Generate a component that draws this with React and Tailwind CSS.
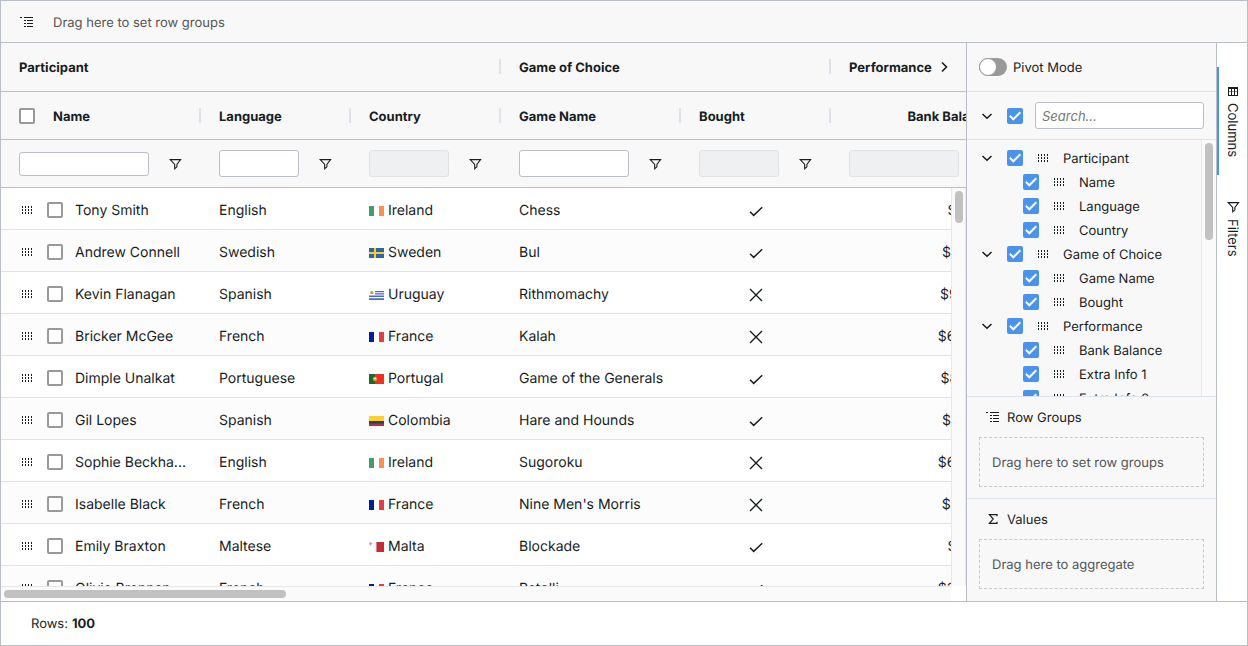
import React from 'react';

const columns = [
  { id: 'name', label: 'Name', width: 'w-[200px]' },
  { id: 'language', label: 'Language', width: 'w-[150px]' },
  { id: 'country', label: 'Country', width: 'w-[150px]', disabled: true },
  { id: 'game', label: 'Game Name', width: 'w-[180px]' },
  { id: 'bought', label: 'Bought', width: 'w-[150px]', disabled: true },
  { id: 'balance', label: 'Bank Balance', width: 'w-[180px]', disabled: true },
];

const rows = [
  ['Tony Smith', 'English', 'Ireland', 'Chess', true, '$7,432'],
  ['Andrew Connell', 'Swedish', 'Sweden', 'Bul', true, '$17,240'],
  ['Kevin Flanagan', 'Spanish', 'Uruguay', 'Rithmomachy', false, '$91,479'],
  ['Bricker McGee', 'French', 'France', 'Kalah', false, '$64,272'],
  ['Dimple Unalkat', 'Portuguese', 'Portugal', 'Game of the Generals', true, '$81,477'],
  ['Gil Lopes', 'Spanish', 'Colombia', 'Hare and Hounds', true, '$17,240'],
  ['Sophie Beckha...', 'English', 'Ireland', 'Sugoroku', false, '$64,273'],
  ['Isabelle Black', 'French', 'France', "Nine Men's Morris", false, '$17,420'],
  ['Emily Braxton', 'Maltese', 'Malta', 'Blockade', true, '$7,432'],
  ['Olivia Brennan', 'French', 'France', 'Patolli', true, '$34,272'],
];

const tree = [
  { label: 'Participant', children: ['Name', 'Language', 'Country'] },
  { label: 'Game of Choice', children: ['Game Name', 'Bought'] },
  { label: 'Performance', children: ['Bank Balance', 'Extra Info 1', 'Extra Info 2'] },
];

function Svg({ children, className = '' }) {
  return (
    <svg viewBox="0 0 16 16" aria-hidden="true" className={`size-4 shrink-0 ${className}`} fill="none" stroke="currentColor">
      {children}
    </svg>
  );
}

const Grip = () => (
  <Svg>
    <path
      stroke="none"
      fill="currentColor"
      d="M3 4h1v2H3zM6 4h1v2H6zM9 4h1v2H9zM12 4h1v2h-1zM3 7h1v2H3zM6 7h1v2H6zM9 7h1v2H9zM12 7h1v2h-1zM3 10h1v2H3zM6 10h1v2H6zM9 10h1v2H9zM12 10h1v2h-1z"
    />
  </Svg>
);

const GroupIcon = () => (
  <Svg>
    <path
      stroke="none"
      fill="currentColor"
      d="M1 3h2v1H1zM5 3h9v1H5zM5 6h2v1H5zM8 6h6v1H8zM5 9h2v1H5zM8 9h6v1H8zM5 12h2v1H5zM8 12h6v1H8z"
    />
  </Svg>
);

const FilterIcon = () => (
  <Svg>
    <path strokeWidth="1.1" d="M3.2 3.6h10.4L9.9 8.4v2.4l-2.2 2V8.4z" />
  </Svg>
);

const ColumnsIcon = () => (
  <Svg>
    <path stroke="none" fill="currentColor" d="M3 4h10v9H3zM4 6v6h2V6zM7 6v6h2V6zM10 6v6h2V6z" fillRule="evenodd" />
    <path strokeWidth="1" strokeOpacity="0.5" d="M4 8.5h8" />
  </Svg>
);

const SigmaIcon = () => (
  <Svg>
    <path strokeWidth="1.2" d="M12 5.2V3.6H4.4L8.2 8l-3.8 4.4H12v-1.6" />
  </Svg>
);

const ChevronDown = () => (
  <Svg>
    <path strokeWidth="1.5" d="M3.5 6L8 10.3L12.5 6" />
  </Svg>
);

const ChevronRight = () => (
  <Svg>
    <path strokeWidth="1.6" d="M6 3.5l4.5 4.5L6 12.5" />
  </Svg>
);

const Tick = () => (
  <Svg>
    <path strokeWidth="1.5" d="M2 8.8L5.7 12.4L14.2 4.2" />
  </Svg>
);

const Cross = () => (
  <Svg>
    <path strokeWidth="1.4" d="M2 2l12 12M14 2L2 14" />
  </Svg>
);

function Flag({ country }) {
  const art = {
    Ireland: (
      <>
        <path fill="#fff" d="M0 0h15v10H0z" />
        <path fill="#469b69" d="M0 0h5v10H0z" />
        <path fill="#f6914f" d="M10 0h5v10h-5z" />
      </>
    ),
    France: (
      <>
        <path fill="#fff" d="M0 0h15v10H0z" />
        <path fill="#001e96" d="M0 0h5v10H0z" />
        <path fill="#e03f46" d="M10 0h5v10h-5z" />
      </>
    ),
    Sweden: (
      <>
        <path fill="#2b66a8" d="M0 0h15v10H0z" />
        <path fill="#fbcc2e" d="M5 0h2v10H5zM0 4h15v2H0z" />
      </>
    ),
    Uruguay: (
      <>
        <path fill="#fff" d="M0 0h15v10H0z" />
        <path fill="#4c69c6" d="M6 1h9v1.2H6zM6 3.2h9v1.3H6zM0 5.6h15v1.3H0zM0 8.2h15v1.8H0z" />
        <circle cx="2.8" cy="2.6" r="1.7" fill="#c99a3c" />
      </>
    ),
    Portugal: (
      <>
        <path fill="#ee3124" d="M0 0h15v10H0z" />
        <path fill="#22662d" d="M0 0h6v10H0z" />
        <circle cx="6" cy="5" r="2.2" fill="#d8a02c" />
        <path fill="#e9e4e0" d="M5 3.8h2v2H5z" />
        <path fill="#e03b36" d="M5 5.4h2L6 6.6z" />
      </>
    ),
    Colombia: (
      <>
        <path fill="#fbd12f" d="M0 0h15v5H0z" />
        <path fill="#1d3f90" d="M0 5h15v3H0z" />
        <path fill="#c72a36" d="M0 7.6h15V10H0z" />
      </>
    ),
    Malta: (
      <>
        <path fill="#fff" d="M0 0h15v10H0z" />
        <path fill="#c42c36" d="M7.4 0H15v10H7.4z" />
        <path fill="#c9a3a8" d="M1 0h1.3v3.4H1zM0 1.1h3.4v1.2H0z" />
      </>
    ),
  };
  return (
    <svg viewBox="0 0 15 10" aria-hidden="true" className="mt-0.5 h-2.5 w-[15px] shrink-0">
      {art[country]}
    </svg>
  );
}

function Checkbox({ checked = false, label, id }) {
  return (
    <span className="relative flex size-4 shrink-0">
      <input
        id={id}
        type="checkbox"
        aria-label={label}
        defaultChecked={checked}
        className="peer size-4 appearance-none rounded-xs border-2 border-[#999] bg-white checked:border-[#4a92ed] checked:bg-[#4a92ed]"
      />
      <svg viewBox="0 0 16 16" aria-hidden="true" className="pointer-events-none absolute inset-0 hidden size-4 peer-checked:block" fill="none" stroke="#fff" strokeWidth="2">
        <path d="M2.8 7.8L6.3 11.3L13.3 4.3" />
      </svg>
    </span>
  );
}

function Separator() {
  return <span className="absolute top-4 right-0 h-[15px] w-0.5 bg-[#dde2eb]" />;
}

function ColGroup() {
  return (
    <colgroup>
      {columns.map((c) => (
        <col key={c.id} className={c.width} />
      ))}
    </colgroup>
  );
}

function HeaderTable() {
  return (
    <div className="overflow-hidden bg-[#f8f8f8]">
      <table className="w-[1010px] table-fixed border-separate border-spacing-0 text-left text-[13px] font-bold whitespace-nowrap">
        <ColGroup />
        <thead>
          <tr className="h-[49px]">
            <th colSpan={3} scope="colgroup" className="relative border-b border-[#babfc7] px-[18px] pt-1">
              Participant
              <Separator />
            </th>
            <th colSpan={2} scope="colgroup" className="relative border-b border-[#babfc7] px-[18px] pt-1">
              Game of Choice
              <Separator />
            </th>
            <th scope="colgroup" className="border-b border-[#babfc7] px-[18px]">
              <div className="flex items-center gap-1">
                <span className="pt-1">Performance</span>
                <button type="button" aria-label="Expand Performance" className="flex">
                  <ChevronRight />
                </button>
              </div>
            </th>
          </tr>
          <tr className="h-12">
            {columns.map((c) => (
              <th key={c.id} scope="col" className="relative border-b border-[#babfc7] px-[18px]">
                <div className={`flex items-center gap-[18px] ${c.id === 'balance' ? 'justify-end' : ''}`}>
                  {c.id === 'name' && <Checkbox label="Select all rows" />}
                  <span className="pt-1">{c.label}</span>
                </div>
                {c.id !== 'balance' && <Separator />}
              </th>
            ))}
          </tr>
          <tr className="h-12">
            {columns.map((c) => (
              <td key={c.id} className="border-b border-[#babfc7] px-[18px]">
                <div className="flex items-center gap-[18px]">
                  <input
                    type="text"
                    aria-label={`${c.label} filter`}
                    disabled={c.disabled}
                    className={`w-0 min-w-0 flex-1 rounded-[3px] border border-[#babfc7] bg-white px-1.5 font-normal disabled:border-[#dfe1e5] disabled:bg-[#eff0f2] ${c.id === 'name' ? 'h-6' : 'h-[27px]'}`}
                  />
                  <button type="button" aria-label={`Open ${c.label} filter menu`} className="flex">
                    <FilterIcon />
                  </button>
                </div>
              </td>
            ))}
          </tr>
        </thead>
      </table>
    </div>
  );
}

function BodyTable() {
  const cell = 'border-b border-[#dde2eb] px-[18px]';
  return (
    <div className="min-w-0 flex-1 overflow-hidden">
      <table aria-label="Players" className="w-[1010px] table-fixed border-separate border-spacing-0 text-sm whitespace-nowrap">
        <ColGroup />
        <tbody>
          {rows.map(([name, language, country, game, bought, balance]) => (
            <tr key={name} className="h-[42px] even:bg-[#fcfcfc]">
              <td className="border-b border-[#dde2eb] pt-0.5 pr-3 pl-[18px]">
                <div className="flex items-center gap-3">
                  <Grip />
                  <Checkbox label={`Select ${name}`} />
                  <span className="pt-0.5">{name}</span>
                </div>
              </td>
              <td className={`${cell} pt-1`}>{language}</td>
              <td className={`${cell} pt-0.5`}>
                <div className="flex items-center gap-1">
                  <Flag country={country} />
                  <span className="pt-0.5">{country}</span>
                </div>
              </td>
              <td className={`${cell} pt-1`}>{game}</td>
              <td className={`${cell} pt-1`}>
                <div className="flex justify-center" role="img" aria-label={bought ? 'Bought' : 'Not bought'}>
                  {bought ? <Tick /> : <Cross />}
                </div>
              </td>
              <td className={`${cell} pt-1 text-right`}>{balance}</td>
            </tr>
          ))}
        </tbody>
      </table>
    </div>
  );
}

function DropZone({ title, icon, children }) {
  return (
    <section className="border-t border-[#dde2eb] px-3 pb-[11px]">
      <h2 className="flex h-10 items-center gap-1.5 px-1.5">
        {icon}
        <span className="pt-1">{title}</span>
      </h2>
      <div className="flex h-[50px] items-center border border-dashed border-[#c6c8cc] px-3 pt-1 text-[#555]">{children}</div>
    </section>
  );
}

function ColumnsPanel() {
  return (
    <aside className="flex w-[251px] shrink-0 flex-col border-x border-[#babfc7] bg-[#f8f8f8] pb-px text-[13px]">
      <div className="flex h-[49px] shrink-0 items-center gap-1.5 border-b border-[#dde2eb] px-3">
        <span className="relative flex h-[18px] w-7">
          <input id="pivot" type="checkbox" role="switch" className="peer h-[18px] w-7 appearance-none rounded-full bg-[#999]" />
          <span className="pointer-events-none absolute top-0 left-0 size-[18px] rounded-full border border-[#999] bg-white peer-checked:left-2.5" />
        </span>
        <label htmlFor="pivot" className="pt-1">
          Pivot Mode
        </label>
      </div>
      <div className="flex h-12 shrink-0 items-center gap-3 border-b border-[#dde2eb] px-3">
        <button type="button" aria-label="Collapse all" className="flex">
          <ChevronDown />
        </button>
        <Checkbox checked label="Toggle all columns" />
        <input
          type="text"
          aria-label="Search columns"
          placeholder="Search..."
          className="h-[27px] w-0 min-w-0 flex-1 rounded-[3px] border border-[#babfc7] bg-white px-1.5 placeholder:text-[#747779] placeholder:italic"
        />
      </div>
      <div className="flex min-h-0 flex-1">
        <ul className="min-w-0 flex-1 overflow-hidden px-3 pt-1.5">
          {tree.map((group) => (
            <li key={group.label}>
              <div className="flex h-6 items-center gap-3">
                <button type="button" aria-label={`Collapse ${group.label}`} className="flex">
                  <ChevronDown />
                </button>
                <Checkbox checked id={`group-${group.label}`} />
                <Grip />
                <label htmlFor={`group-${group.label}`} className="pt-1">
                  {group.label}
                </label>
              </div>
              <ul className="pl-11">
                {group.children.map((child) => (
                  <li key={child} className="flex h-6 items-center gap-3">
                    <Checkbox checked id={`column-${child}`} />
                    <Grip />
                    <label htmlFor={`column-${child}`} className="pt-1">
                      {child}
                    </label>
                  </li>
                ))}
              </ul>
            </li>
          ))}
        </ul>
        <div className="w-[15px] shrink-0 border-l border-[#e8e8e8] bg-[#fafafa] px-[3px] pt-[3px]">
          <div className="h-[97px] w-2 rounded-full bg-[#c1c1c1]" />
        </div>
      </div>
      <DropZone title="Row Groups" icon={<GroupIcon />}>
        Drag here to set row groups
      </DropZone>
      <DropZone title="Values" icon={<SigmaIcon />}>
        Drag here to aggregate
      </DropZone>
    </aside>
  );
}

function SideTabs() {
  return (
    <nav aria-label="Tool panels" className="flex w-[30px] shrink-0 flex-col gap-2 pt-6 text-[13px]">
      <button type="button" className="flex flex-col items-center gap-1 border-l-2 border-[#4a92ed] pt-4 pb-[18px]">
        <ColumnsIcon />
        <span className="pr-0.5 [writing-mode:vertical-lr]">Columns</span>
      </button>
      <button type="button" className="flex flex-col items-center gap-1 border-l-2 border-transparent pt-4 pb-[18px]">
        <FilterIcon />
        <span className="pr-0.5 [writing-mode:vertical-lr]">Filters</span>
      </button>
    </nav>
  );
}

export default function App() {
  return (
    <div className="flex h-screen flex-col border border-[#babfc7] bg-white font-[Inter,sans-serif] text-[#181d1f] [text-rendering:geometricPrecision]">
      <div className="flex h-[42px] shrink-0 items-center gap-[18px] border-b border-[#babfc7] bg-[#f8f8f8] px-[18px] text-[13px] text-[#555]">
        <span className="flex text-[#181d1f]">
          <GroupIcon />
        </span>
        <span className="pt-1">Drag here to set row groups</span>
      </div>
      <main className="flex min-h-0 flex-1">
        <div className="flex min-w-0 flex-1 flex-col">
          <HeaderTable />
          <div className="flex min-h-0 flex-1">
            <BodyTable />
            <div className="w-[15px] shrink-0 border-x border-[#e8e8e8] bg-[#fafafa] px-[3px] pt-[3px]">
              <div className="h-8 w-2 rounded-full bg-[#c1c1c1]" />
            </div>
          </div>
          <div className="mr-[15px] h-[15px] shrink-0 border-t border-[#e8e8e8] bg-[#fafafa] px-[3px] pt-[3px]">
            <div className="h-2 w-[282px] rounded-full bg-[#c1c1c1]" />
          </div>
        </div>
        <ColumnsPanel />
        <SideTabs />
      </main>
      <footer className="flex h-11 shrink-0 items-center gap-1 border-t border-[#babfc7] px-[30px] pt-0.5 text-[13px]">
        Rows: <strong>100</strong>
      </footer>
    </div>
  );
}
